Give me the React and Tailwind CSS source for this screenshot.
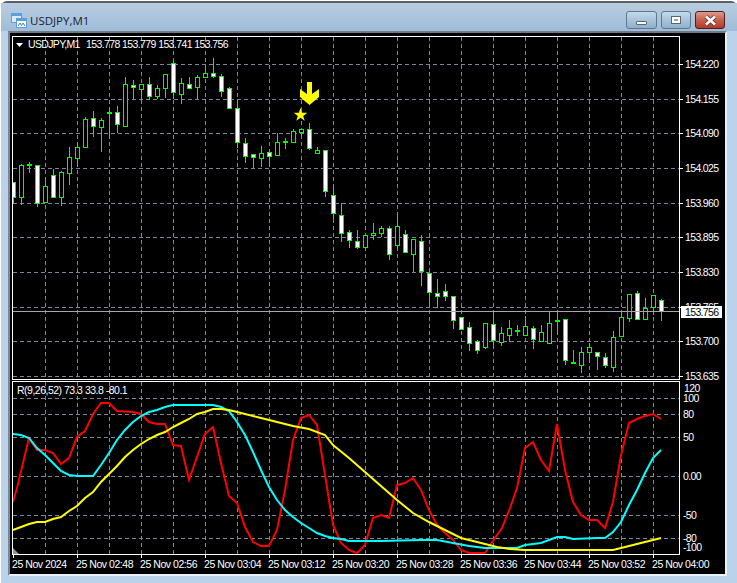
const candles = [
  [182, 182, 197, 203, 1], [164, 165, 197, 204, 0], [162, 164, 164, 172, 0], [165, 165, 203, 206, 1],
  [178, 186, 202, 202, 0], [169, 175, 197, 197, 1], [171, 172, 197, 205, 0], [147, 157, 173, 184, 0],
  [142, 147, 158, 166, 0], [117, 119, 147, 147, 0], [111, 118, 126, 136, 1], [118, 120, 127, 151, 0],
  [108, 112, 112, 137, 0], [106, 112, 124, 132, 1], [77, 84, 126, 126, 0], [80, 85, 87, 99, 1],
  [84, 84, 89, 99, 0], [77, 84, 96, 99, 1], [85, 88, 96, 98, 0], [74, 74, 88, 97, 0],
  [61, 63, 92, 98, 1], [78, 83, 94, 103, 0], [77, 84, 88, 88, 1], [75, 77, 87, 98, 0],
  [66, 73, 77, 77, 0], [58, 73, 76, 77, 1], [74, 76, 91, 96, 1], [87, 88, 108, 108, 1],
  [100, 108, 142, 147, 1], [138, 143, 156, 162, 1], [154, 154, 157, 167, 1], [146, 153, 158, 166, 0],
  [152, 152, 156, 165, 1], [133, 142, 155, 155, 0], [138, 141, 141, 148, 0], [129, 131, 142, 142, 0],
  [129, 129, 132, 136, 0], [123, 129, 148, 149, 1], [147, 150, 153, 153, 0], [150, 150, 191, 196, 1],
  [187, 195, 213, 218, 1], [203, 215, 233, 241, 1], [230, 232, 240, 247, 1], [230, 241, 247, 248, 1],
  [235, 235, 247, 248, 0], [223, 233, 235, 239, 0], [226, 228, 233, 236, 0], [226, 228, 254, 259, 1],
  [214, 226, 245, 248, 0], [230, 234, 252, 252, 1], [239, 239, 254, 271, 0], [235, 241, 271, 285, 1],
  [273, 273, 292, 303, 1], [279, 293, 296, 307, 1], [284, 291, 296, 300, 1], [296, 296, 320, 328, 1],
  [317, 317, 329, 329, 1], [322, 327, 343, 350, 1], [340, 341, 350, 353, 1], [323, 323, 347, 348, 0],
  [312, 324, 340, 345, 1], [327, 333, 342, 345, 0], [320, 328, 335, 341, 0], [325, 330, 330, 335, 0],
  [316, 326, 335, 335, 0], [326, 328, 339, 348, 1], [325, 332, 341, 341, 0], [312, 323, 343, 343, 0],
  [312, 320, 320, 333, 0], [319, 319, 360, 364, 1], [350, 362, 362, 363, 0], [347, 352, 365, 372, 0],
  [343, 347, 352, 358, 0], [352, 352, 356, 369, 1], [353, 357, 365, 367, 1], [331, 337, 367, 371, 0],
  [312, 317, 336, 336, 0], [294, 294, 318, 321, 0], [291, 293, 319, 319, 1], [298, 308, 319, 319, 0],
  [295, 295, 307, 314, 0], [299, 300, 311, 320, 1],
]

const red = "13,502 17,488 29,438 37,450 45,450 53,453 61,464 69,458 77,437 85,431 93,414 101,403 109,403 117,411 133,412 141,414 149,422 157,424 165,424 173,445 181,446 189,480 197,457 205,434 213,427 221,463 229,496 237,503 245,527 253,542 261,546 269,546 277,530 285,490 293,440 301,418 309,415 317,425 325,475 333,525 341,543 349,550 357,553 365,545 373,518 381,515 389,518 397,485 405,483 413,478 421,490 429,510 437,525 445,533 453,540 461,550 469,553 485,553 497,535 502,528 510,508 517,488 525,448 533,442 541,460 549,471 557,424 565,470 573,502 581,515 589,520 597,520 605,528 613,502 621,455 629,423 637,419 645,416 653,414 661,419"
const cyan = "13,434 21,435 29,438 37,448 45,455 53,463 61,471 69,475 77,476 93,476 101,465 109,453 117,440 125,430 133,422 141,416 149,412 157,410 165,407 173,405 213,405 221,407 229,411 237,422 245,435 253,452 261,470 269,487 277,500 285,510 293,517 301,523 309,528 317,533 325,536 333,538 341,539 349,541 381,541 421,540 437,540 453,543 469,546 485,548 510,548 517,548 525,545 541,543 549,540 557,537 565,537 573,539 597,538 605,538 613,532 621,522 629,505 637,490 645,473 653,458 661,450"
const yellow = "13,530 21,527 29,524 37,522 45,522 53,519 61,517 69,511 77,506 85,498 93,492 101,482 109,474 117,466 125,457 133,450 141,444 149,439 157,435 165,432 173,427 181,423 189,419 197,414 205,412 213,409 221,409 229,410 237,412 245,414 261,418 277,422 293,426 309,429 325,435 333,445 349,458 365,472 381,486 397,500 413,513 429,522 445,530 461,538 477,542 497,547 510,549 525,550 613,550 621,548 629,546 637,544 645,542 653,540 661,538"

const priceLevels = [
  [64, "154.220"], [99, "154.155"], [133, "154.090"], [168, "154.025"], [203, "153.960"],
  [237, "153.895"], [272, "153.830"], [307, "153.765"], [341, "153.700"], [376, "153.635"],
]
const rsiLevels = [[398, "100"], [414, "80"], [437, "50"], [476, "0.00"], [515, "-50"], [538, "-80"]]
const gridX = [45, 77, 109, 141, 173, 205, 237, 269, 301, 333, 365, 397, 429, 461, 493, 525, 557, 589, 621, 653]
const timeLabels = ["25 Nov 2024", "25 Nov 02:48", "25 Nov 02:56", "25 Nov 03:04", "25 Nov 03:12", "25 Nov 03:20", "25 Nov 03:28", "25 Nov 03:36", "25 Nov 03:44", "25 Nov 03:52", "25 Nov 04:00"]
const timeTicks = [13, 77, 141, 205, 269, 333, 397, 461, 525, 589, 653]

function Grid({ levels, top, bottom }) {
  return (
    <g stroke="#778899" strokeDasharray="4 3" shapeRendering="crispEdges">
      {levels.map(([y]) => <line key={y} x1="13" x2="679" y1={y + 0.5} y2={y + 0.5} />)}
      {gridX.map((x) => <line key={x} x1={x + 0.5} x2={x + 0.5} y1={top} y2={bottom} />)}
    </g>
  )
}

function Candle({ c, i }) {
  const x = 13 + 8 * i
  const [high, top, bottom, low, white] = c
  return (
    <g shapeRendering="crispEdges">
      <line x1={x + 0.5} x2={x + 0.5} y1={high} y2={low + 1} stroke="#00ff00" />
      <rect x={x - 1.5} y={top + 0.5} width="4" height={Math.max(bottom - top, 1)} fill={white ? "#fff" : "#000"} stroke="#00ff00" />
    </g>
  )
}

function MainChart() {
  return (
    <svg viewBox="10 33 715 348" className="block h-[348px] w-[715px] text-[10.5px]">
      <defs>
        <clipPath id="main-clip"><rect x="13" y="37" width="666" height="342" /></clipPath>
      </defs>
      <Grid levels={priceLevels} top={37} bottom={379} />
      <g clipPath="url(#main-clip)">
        {candles.map((c, i) => <Candle key={i} c={c} i={i} />)}
      </g>
      <line x1="13" x2="680" y1="311.5" y2="311.5" stroke="#a6a6a6" shapeRendering="crispEdges" />
      <rect x="12.5" y="36.5" width="667" height="342.5" fill="none" stroke="#fff" shapeRendering="crispEdges" />
      {priceLevels.map(([y, label]) => (
        <g key={y}>
          <line x1="680" x2="683" y1={y + 0.5} y2={y + 0.5} stroke="#fff" shapeRendering="crispEdges" />
          <text x="685" y={y + 4} className="fill-white tracking-[-0.65px]">{label}</text>
        </g>
      ))}
      <rect x="681" y="306" width="41" height="12" fill="#fff" />
      <text x="685" y="316" className="fill-black tracking-[-0.65px]">153.756</text>
      <polygon points="16,43 23,43 19.5,47" fill="#fff" />
      <text x="28" y="48" className="fill-white tracking-[-0.65px]">USDJPY,M1</text>
      <text x="86" y="48" className="fill-white tracking-[-0.6px]">153.778 153.779 153.741 153.756</text>
      <polygon points="307,82 312,82 312,94 319,89 319,97 309.5,105 300,97 300,89 307,94" fill="#ffff00" />
      <polygon points="300.5,108 302.2,112.8 307.3,112.8 303.2,115.9 304.7,120.8 300.5,117.8 296.3,120.8 297.8,115.9 293.7,112.8 298.8,112.8" fill="#ffff00" />
    </svg>
  )
}

function RsiChart() {
  return (
    <svg viewBox="10 381 715 177" className="block h-[177px] w-[715px] text-[10.5px]">
      <Grid levels={rsiLevels} top={382} bottom={554} />
      <polyline points={red} fill="none" stroke="#ff0000" strokeWidth="2" />
      <polyline points={cyan} fill="none" stroke="#00ffff" strokeWidth="2" />
      <polyline points={yellow} fill="none" stroke="#ffff00" strokeWidth="2" />
      <rect x="12.5" y="381.5" width="667" height="173" fill="none" stroke="#fff" shapeRendering="crispEdges" />
      <polygon points="13,548 19,554 13,554" fill="#8a94a0" />
      {rsiLevels.map(([y, label]) => (
        <text key={y} x="683" y={y + 4} className="fill-white tracking-[-0.65px]">{label}</text>
      ))}
      <text x="684" y="392" className="fill-white tracking-[-0.65px]">120</text>
      <text x="683" y="551" className="fill-white tracking-[-0.65px]">-100</text>
      <text x="17" y="394" className="fill-white tracking-[-0.5px]">R(9,26,52) 73.3 33.8 -80.1</text>
      {timeTicks.map((x) => (
        <line key={x} x1={x + 0.5} x2={x + 0.5} y1="555" y2="558" stroke="#fff" shapeRendering="crispEdges" />
      ))}
    </svg>
  )
}

function WindowIcon() {
  return (
    <svg width="16" height="16" viewBox="0 0 16 16" className="mt-[10px] ml-[3px]">
      <rect x="0.5" y="0.5" width="10" height="9" fill="#dbeafb" stroke="#5b9fdc" />
      <rect x="1" y="1" width="9" height="2" fill="#5b9fdc" />
      <rect x="5.5" y="5.5" width="10" height="9" fill="#fff" stroke="#5b9fdc" />
      <rect x="6" y="6" width="9" height="2" fill="#5b9fdc" />
      <path d="M7 13 L9 10 L10.5 12.5 L12 10 L14 13" fill="none" stroke="#3f7fc0" strokeWidth="1" />
    </svg>
  )
}

function CaptionButtons() {
  return (
    <div className="mt-[8px] mr-[12px] flex gap-[4px]">
      <div className="flex h-[18px] w-[31px] items-end justify-center rounded-[3px] border border-[#5f7690] bg-linear-to-b from-[#c6d9ea] via-[#a9c3da] to-[#8fb0cd] pb-[3px]">
        <div className="h-[4px] w-[11px] rounded-[1px] border border-[#5b6675] bg-white" />
      </div>
      <div className="flex h-[18px] w-[30px] items-center justify-center rounded-[3px] border border-[#5f7690] bg-linear-to-b from-[#c6d9ea] via-[#a9c3da] to-[#8fb0cd]">
        <div className="h-[6px] w-[8px] border-2 border-white bg-[#8fa6bb] outline outline-[#5b6675]" />
      </div>
      <div className="flex h-[18px] w-[30px] items-center justify-center rounded-[3px] border border-[#4d1c24] bg-linear-to-b from-[#dc9a8c] via-[#c8604f] to-[#b03a28]">
        <svg width="13" height="11" viewBox="0 0 13 11">
          <path d="M2 1.5 L11 9.5 M11 1.5 L2 9.5" stroke="#5b3030" strokeWidth="4" />
          <path d="M2 1.5 L11 9.5 M11 1.5 L2 9.5" stroke="#fff" strokeWidth="2.6" />
        </svg>
      </div>
    </div>
  )
}

export default function App() {
  return (
    <div className="h-[583px] w-[737px] overflow-hidden bg-white pt-[1px] pl-[1px] font-['Liberation_Sans',sans-serif]">
      <div className="flex h-[582px] flex-col rounded-t-[6px] border-t-2 border-[#5a6066] bg-[#bad2ea]">
        <div className="flex h-[28px] justify-between bg-linear-to-b from-[#b9cde0] to-[#9fbcd8]">
          <div className="flex gap-[3px] pl-[7px]">
            <WindowIcon />
            <span className="mt-[9px] font-['Open_Sans',sans-serif] text-[11.5px] leading-[17px] text-[#17222e]">USDJPY,M1</span>
          </div>
          <CaptionButtons />
        </div>
        <div className="mr-[10px] mb-[7px] ml-[7px] flex h-[545px] flex-col border-2 border-t-[#6f7c88] border-r-[#e9f1f8] border-b-[#e9f1f8] border-l-[#7a8794] bg-black">
          <MainChart />
          <RsiChart />
          <div className="flex pl-[2px] text-[10.5px] leading-[12px] tracking-[-0.45px] text-white">
            {timeLabels.map((label) => (
              <span key={label} className="w-[64px] shrink-0 whitespace-nowrap">{label}</span>
            ))}
          </div>
        </div>
      </div>
    </div>
  )
}
